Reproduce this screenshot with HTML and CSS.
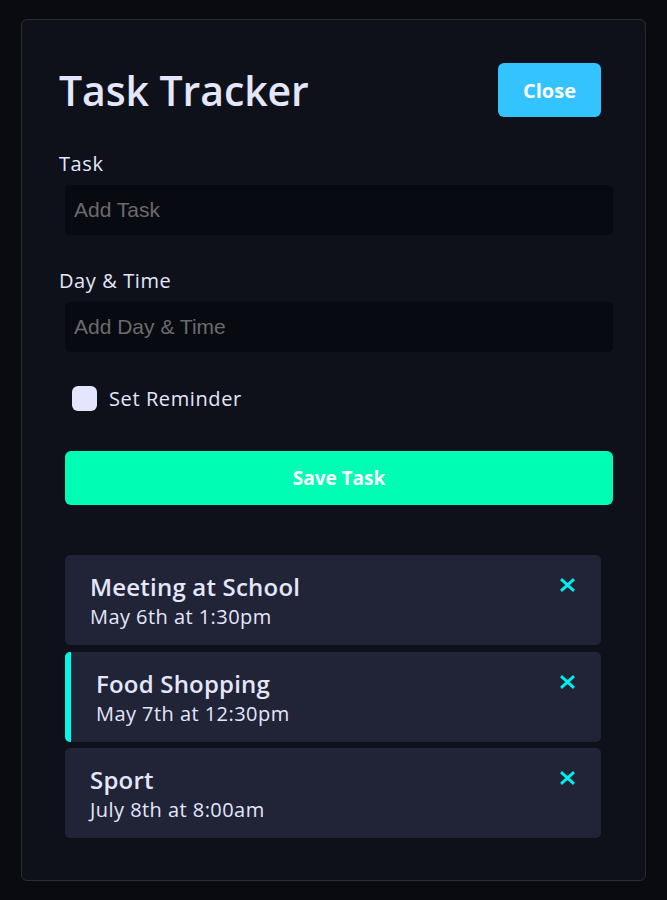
FILE: index.html
```html
<!DOCTYPE html>
<html lang="en">
<head>
<meta charset="utf-8">
<title>Task Tracker</title>
<link rel="stylesheet" href="styles.css">
</head>
<body>
<div class="container">
  <header class="header">
    <h1 class="title">Task Tracker</h1>
    <button class="btn btn-close">Close</button>
  </header>
  <form class="add-form">
    <div class="form-control">
      <label class="label">Task</label>
      <input class="input" type="text" placeholder="Add Task">
    </div>
    <div class="form-control">
      <label class="label">Day &amp; Time</label>
      <input class="input" type="text" placeholder="Add Day &amp; Time">
    </div>
    <div class="form-check">
      <span class="checkbox"></span>
      <span class="check-label">Set Reminder</span>
    </div>
    <button type="button" class="btn btn-save">Save Task</button>
  </form>
  <div class="tasks">
    <div class="task">
      <div class="task-text">
        <h3 class="task-title">Meeting at School</h3>
        <p class="task-day">May 6th at 1:30pm</p>
      </div>
      <svg class="x-icon" viewBox="0 0 17 14" width="17" height="14"><path d="M2 1.2 L15 12.8 M15 1.2 L2 12.8" stroke="currentColor" stroke-width="2.9" fill="none"/></svg>
    </div>
    <div class="task reminder">
      <div class="task-text">
        <h3 class="task-title">Food Shopping</h3>
        <p class="task-day">May 7th at 12:30pm</p>
      </div>
      <svg class="x-icon" viewBox="0 0 17 14" width="17" height="14"><path d="M2 1.2 L15 12.8 M15 1.2 L2 12.8" stroke="currentColor" stroke-width="2.9" fill="none"/></svg>
    </div>
    <div class="task">
      <div class="task-text">
        <h3 class="task-title">Sport</h3>
        <p class="task-day">July 8th at 8:00am</p>
      </div>
      <svg class="x-icon" viewBox="0 0 17 14" width="17" height="14"><path d="M2 1.2 L15 12.8 M15 1.2 L2 12.8" stroke="currentColor" stroke-width="2.9" fill="none"/></svg>
    </div>
  </div>
</div>
</body>
</html>
```

FILE: styles.css
```css
* {
  box-sizing: border-box;
}

body {
  margin: 0;
  background: #090b10;
  font-family: "Open Sans", "Inter", sans-serif;
  color: #e4e7fc;
}

.container {
  width: 625px;
  height: 862px;
  margin: 19px 0 0 21px;
  background: #0e111a;
  border: 1px solid #2a2d36;
  border-radius: 6px;
  padding: 43px 32px 0 37px;
}

.header {
  display: flex;
  align-items: center;
  justify-content: space-between;
  height: 54px;
  margin-right: 12px;
  margin-bottom: 33px;
}

.title {
  margin: 0;
  font-size: 41px;
  font-weight: 600;
  letter-spacing: -0.1px;
  color: #e4e7fc;
}

.btn {
  border: none;
  border-radius: 6px;
  color: #ffffff;
  font-family: "Open Sans", "Inter", sans-serif;
  font-weight: 700;
  cursor: pointer;
}

.btn-close {
  width: 103px;
  height: 54px;
  background: #33c3ff;
  font-size: 20px;
}

.form-control {
  display: flex;
  flex-direction: column;
  margin-bottom: 32px;
}

.label {
  height: 28px;
  line-height: 28px;
  font-size: 20px;
  letter-spacing: 0.6px;
  margin-bottom: 7px;
}

.input {
  height: 50px;
  margin-left: 6px;
  border: none;
  border-radius: 5px;
  background: #080a12;
  padding: 0 9px;
  font-family: "Liberation Sans", Arial, sans-serif;
  font-size: 21px;
  color: #e4e7fc;
}

.input::placeholder {
  color: #6b6b6b;
}

.form-check {
  display: flex;
  align-items: center;
  gap: 12px;
  height: 25px;
  margin: 34px 0 40px 13px;
}

.checkbox {
  width: 25px;
  height: 25px;
  border-radius: 6px;
  background: #e4e6fd;
}

.check-label {
  font-size: 20px;
  letter-spacing: 0.6px;
}

.btn-save {
  display: block;
  width: 548px;
  height: 54px;
  margin-left: 6px;
  background: #00fdb4;
  font-size: 19px;
}

.tasks {
  display: flex;
  flex-direction: column;
  gap: 6.5px;
  margin: 50px 12px 0 6px;
}

.task {
  display: flex;
  justify-content: space-between;
  align-items: flex-start;
  height: 90px;
  padding: 16px 25px 0 25px;
  background: #212336;
  border-radius: 5px;
}

.task.reminder {
  border-left: 6px solid #00f8ea;
  padding-left: 25px;
}

.task-title {
  margin: 0;
  font-size: 24px;
  font-weight: 600;
  line-height: 31px;
  letter-spacing: 0.2px;
}

.task-day {
  margin: 1px 0 0;
  font-size: 20px;
  line-height: 28px;
  letter-spacing: 0.45px;
}

.x-icon {
  color: #00eeee;
  margin-top: 7px;
}
```
